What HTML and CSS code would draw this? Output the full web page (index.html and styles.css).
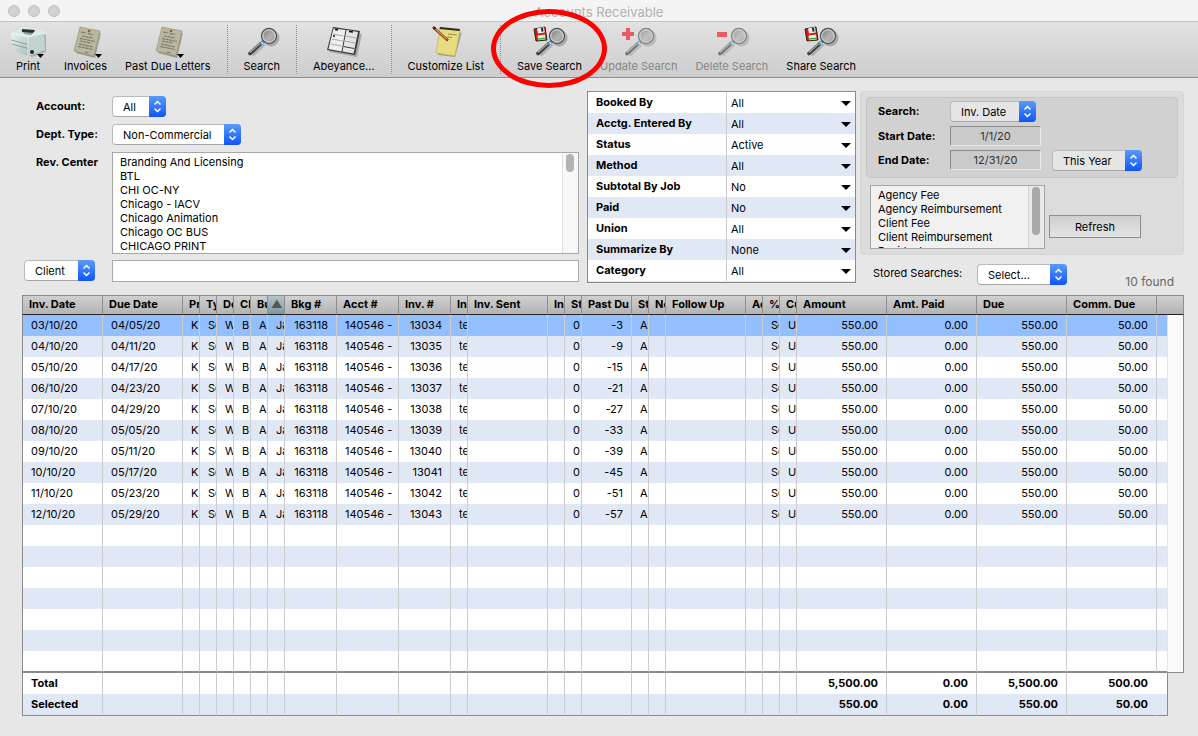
FILE: index.html
```html
<!DOCTYPE html>
<html lang="en">
  <head>
    <meta charset="utf-8">
    <title>Accounts Receivable</title>
    <link rel="stylesheet" href="styles.css">
  </head>
  <body>
    <svg class="defs" width="0" height="0" aria-hidden="true">
      <defs>
        <linearGradient id="g-lens" x1="0" y1="0" x2="1" y2="1">
          <stop offset="0" stop-color="#808080"/><stop offset="0.6" stop-color="#b4b4b4"/><stop offset="1" stop-color="#8e8e8e"/>
        </linearGradient>
        <linearGradient id="g-print" x1="0" y1="0" x2="1" y2="1">
          <stop offset="0" stop-color="#e9f3f2"/><stop offset="1" stop-color="#a9bdbd"/>
        </linearGradient>
      </defs>
      <symbol id="i-printer" viewBox="0 0 36 34">
        <path d="M2 24L22 32L36 27V10L30 8Z" fill="#000" opacity="0.2"/>
        <path d="M2 8L12 2L34 5L35 8L21 13Z" fill="#dce9e8"/>
        <path d="M12 4L25 5L24 7L21 9L12 7Z" fill="#2b3232"/>
        <path d="M15 7L23 8L21 10L14 9Z" fill="#8c9a9a"/>
        <path d="M1 8L18 12V31L2 25Z" fill="url(#g-print)"/>
        <path d="M18 12L34 8L35 25L19 31Z" fill="#c2d3d3"/>
        <path d="M1 15L18 19.500M2 19L18 23.500" stroke="#7d9292" stroke-width="0.800" fill="none"/>
        <path d="M18 12V31M2 8L18 12L34 8" stroke="#f4fafa" stroke-width="0.800" fill="none"/>
        <circle cx="22" cy="27" r="2" fill="#222"/>
      </symbol>
      <symbol id="i-letter" viewBox="0 0 36 34">
        <path d="M13 4L33 8L27 33L8 28Z" fill="#000" opacity="0.28"/>
        <path d="M12 2L32 6L26 31L6 26Z" fill="#b9b79c" stroke="#8f8d76" stroke-width="0.600"/>
        <circle cx="21" cy="6" r="1.300" fill="#9b5b2b"/>
        <path d="M13 7L18 8M20 8.500L25 9.500M14 11L25 13M12 13.500L27 16.500M12 16L23 18M11 19L25 22M10 21.500L25 24.500M17 27L21 28" stroke="#77776f" stroke-width="1.100" stroke-dasharray="3 0.600" fill="none"/>
      </symbol>
      <symbol id="i-lens" viewBox="0 0 36 34">
        <path d="M8 30L20 19" stroke="#000" stroke-width="4" opacity="0.18"/>
        <circle cx="27" cy="13" r="8.500" fill="#000" opacity="0.22"/>
        <path d="M6 28.500L17 18.500" stroke="#3c3c3c" stroke-width="3.600" stroke-linecap="round"/>
        <path d="M6 27.500L16 18.500" stroke="#aaa" stroke-width="1.200"/>
        <path d="M16 19.500L20 16" stroke="#4a8fb8" stroke-width="3.600"/>
        <path d="M17.500 17.200L19 19" stroke="#e2f3fb" stroke-width="1.200"/>
        <circle cx="25" cy="11" r="7.500" fill="#a9a9a9" stroke="#55585a" stroke-width="1.400"/>
        <circle cx="25" cy="11" r="6.200" fill="url(#g-lens)" stroke="#dedede" stroke-width="0.900"/>
      </symbol>
      <symbol id="i-floppy" viewBox="0 0 36 34">
        <path d="M2 4L13 2L15 15L4 16Z" fill="#e01414" stroke="#161616" stroke-width="0.900"/>
        <path d="M5 3.500L12 2.200L12.700 7.500L6 8.500Z" fill="#f3f3f3"/>
        <path d="M9 3L11 2.700L11.500 6.500L9.500 6.800Z" fill="#222"/>
        <path d="M5.500 10.500L13 9.500L13.600 14.500L6 15.300Z" fill="#dff8df"/>
        <path d="M6 14L13.500 13.200" stroke="#35b135" stroke-width="1.500"/>
      </symbol>
      <symbol id="i-book" viewBox="0 0 36 34">
        <path d="M8 6L36 9L31 32L3 27Z" fill="#000" opacity="0.22"/>
        <path d="M7 2L34 6L29 30L1 25Z" fill="#3a3a3a"/>
        <path d="M7.500 3.500L19.500 5L15.500 26.500L2.500 24Z" fill="#efefef"/>
        <path d="M20.500 5L32 7L27.500 28.500L16.500 26.500Z" fill="#e4e4e4"/>
        <path d="M7 9L17.500 11M6 14L16.500 16M5 19L15.500 21M19.500 11L30 13M18.500 16L29 18" stroke="#a3a3a3" stroke-width="0.900"/>
        <path d="M17.500 21.500L28 23.500" stroke="#444" stroke-width="1.200"/>
        <path d="M9 4.500L12 5M23 6.500L27 7M7 11H9" stroke="#111" stroke-width="1.500"/>
      </symbol>
      <symbol id="i-notepad" viewBox="0 0 36 34">
        <path d="M13 5L34 8L27 32L10 30Z" fill="#000" opacity="0.25"/>
        <path d="M12 3L32 5L27 31L8 28Z" fill="#e8dd7e" stroke="#b5a94f" stroke-width="0.600"/>
        <path d="M12 2L32 4L31.500 6L11.500 4Z" fill="#2c2a22"/>
        <path d="M20 9L29 10M19 12L24 12.500" stroke="#958b48" stroke-width="1"/>
        <path d="M6 3L20 15.500" stroke="#6d3a17" stroke-width="2.600"/>
        <path d="M7 3.500L19 14.500" stroke="#e08b3c" stroke-width="1.400"/>
        <path d="M5 2L7.500 4" stroke="#5b1c1c" stroke-width="2.600"/>
      </symbol>
      <symbol id="i-plus" viewBox="0 0 36 34">
        <path d="M5 3H9V7H13V11H9V15H5V11H1V7H5Z" fill="#f01822"/>
      </symbol>
      <symbol id="i-minus" viewBox="0 0 36 34">
        <path d="M3 7H13V12H3Z" fill="#f01822"/>
      </symbol>
      <symbol id="i-drop" viewBox="0 0 36 34">
        <path d="M27 29H34L30.500 33Z" fill="#000"/>
      </symbol>
    </svg>

    <div class="window">
      <header class="titlebar">
        <div class="lights"><span></span><span></span><span></span></div>
        <h1 class="titlebar__title">Accounts Receivable</h1>
      </header>

      <nav class="toolbar">
        <button class="tool" type="button"><svg><use href="#i-printer"/><use href="#i-drop"/></svg>Print</button>
        <button class="tool" type="button"><svg><use href="#i-letter"/><use href="#i-drop"/></svg>Invoices</button>
        <button class="tool" type="button"><svg><use href="#i-letter"/><use href="#i-drop"/></svg>Past Due Letters</button>
        <span class="toolbar__sep"></span>
        <button class="tool" type="button"><svg><use href="#i-lens"/></svg>Search</button>
        <span class="toolbar__sep"></span>
        <button class="tool" type="button"><svg><use href="#i-book"/></svg>Abeyance...</button>
        <span class="toolbar__sep"></span>
        <button class="tool" type="button"><svg><use href="#i-notepad"/></svg>Customize List</button>
        <span class="toolbar__sep"></span>
        <button class="tool tool--marked" type="button">
          <svg><use href="#i-lens"/><use href="#i-floppy"/></svg>Save Search
          <span class="tool__ring"></span>
        </button>
        <button class="tool" type="button" disabled><svg><use href="#i-lens"/><use href="#i-plus"/></svg>Update Search</button>
        <button class="tool" type="button" disabled><svg><use href="#i-lens"/><use href="#i-minus"/></svg>Delete Search</button>
        <button class="tool" type="button"><svg><use href="#i-lens"/><use href="#i-floppy"/></svg>Share Search</button>
      </nav>

      <main class="content">
        <form class="filters">
          <div class="account">
            <label class="account__label" for="account">Account:</label>
            <span class="popup popup--xs"><select id="account"><option>All</option></select></span>
            <label class="account__label" for="dept">Dept. Type:</label>
            <span class="popup popup--lg"><select id="dept"><option>Non-Commercial</option></select></span>
            <label class="account__label" for="center">Rev. Center</label>
            <div class="listbox listbox--center">
              <select id="center" multiple>
                <option>Branding And Licensing</option>
                <option>BTL</option>
                <option>CHI OC-NY</option>
                <option>Chicago - IACV</option>
                <option>Chicago Animation</option>
                <option>Chicago OC BUS</option>
                <option>CHICAGO PRINT</option>
              </select>
              <div class="listbox__track"><span></span></div>
            </div>
            <span class="popup popup--sm"><select aria-label="Search field"><option>Client</option></select></span>
            <input class="account__input" type="text" aria-label="Client">
          </div>

          <div class="options">
            <div class="option"><label for="o-booked">Booked By</label><select id="o-booked"><option>All</option></select></div>
            <div class="option"><label for="o-acctg">Acctg. Entered By</label><select id="o-acctg"><option>All</option></select></div>
            <div class="option"><label for="o-status">Status</label><select id="o-status"><option>Active</option></select></div>
            <div class="option"><label for="o-method">Method</label><select id="o-method"><option>All</option></select></div>
            <div class="option"><label for="o-subtotal">Subtotal By Job</label><select id="o-subtotal"><option>No</option></select></div>
            <div class="option"><label for="o-paid">Paid</label><select id="o-paid"><option>No</option></select></div>
            <div class="option"><label for="o-union">Union</label><select id="o-union"><option>All</option></select></div>
            <div class="option"><label for="o-summarize">Summarize By</label><select id="o-summarize"><option>None</option></select></div>
            <div class="option"><label for="o-category">Category</label><select id="o-category"><option>All</option></select></div>
          </div>

          <div class="side">
            <div class="panel">
              <div class="dates">
                <label for="search-by">Search:</label>
                <span class="popup popup--date"><select id="search-by"><option>Inv. Date</option></select></span>
                <label class="dates__start" for="start">Start Date:</label>
                <input id="start" type="text" value="1/1/20">
                <label class="dates__start" for="end">End Date:</label>
                <input id="end" type="text" value="12/31/20">
                <span class="popup popup--md"><select aria-label="Period"><option>This Year</option></select></span>
              </div>
              <div class="fees">
                <div class="listbox listbox--fees">
                  <select aria-label="Fee types" multiple>
                    <option>Agency Fee</option>
                    <option>Agency Reimbursement</option>
                    <option>Client Fee</option>
                    <option>Client Reimbursement</option>
                    <option>Residuals</option>
                  </select>
                  <div class="listbox__track"><span></span></div>
                </div>
                <button class="refresh" type="submit">Refresh</button>
              </div>
            </div>
            <div class="stored">
              <label for="stored">Stored Searches:</label>
              <span class="popup popup--md"><select id="stored"><option>Select...</option></select></span>
              <span class="stored__found">10 found</span>
            </div>
          </div>
        </form>

        <table class="invoices" id="invoices">
          <colgroup></colgroup>
          <thead></thead>
          <tbody></tbody>
          <tfoot></tfoot>
        </table>
      </main>
    </div>

    <script>
      // name, width, value (same for every invoice unless it is a function), alignment
      const columns = [
        ['Inv. Date', 81, r => r[0]],
        ['Due Date', 80, r => r[1]],
        ['Pr', 17, 'K'],
        ['Ty', 17, 'Se'],
        ['De', 17, 'W'],
        ['Cl', 17, 'B'],
        ['Bu', 17, 'A'],
        ['▲', 17, 'Ja'],
        ['Bkg #', 52, '163118', 'num'],
        ['Acct #', 62, '140546 -'],
        ['Inv. #', 52, r => r[2], 'num'],
        ['In', 17, 'te'],
        ['Inv. Sent', 80, ''],
        ['In', 17, ''],
        ['St', 17, '0'],
        ['Past Du', 50, r => r[3], 'num'],
        ['St', 17, 'A'],
        ['No', 17, ''],
        ['Follow Up', 80, ''],
        ['Ac', 17, ''],
        ['%', 17, 'Se'],
        ['Cu', 17, 'U'],
        ['Amount', 90, '550.00', 'num'],
        ['Amt. Paid', 90, '0.00', 'num'],
        ['Due', 90, '550.00', 'num'],
        ['Comm. Due', 90, '50.00', 'num'],
        ['', 0, '']
      ];

      const invoices = [
        ['03/10/20', '04/05/20', '13034', '-3'],
        ['04/10/20', '04/11/20', '13035', '-9'],
        ['05/10/20', '04/17/20', '13036', '-15'],
        ['06/10/20', '04/23/20', '13037', '-21'],
        ['07/10/20', '04/29/20', '13038', '-27'],
        ['08/10/20', '05/05/20', '13039', '-33'],
        ['09/10/20', '05/11/20', '13040', '-39'],
        ['10/10/20', '05/17/20', '13041', '-45'],
        ['11/10/20', '05/23/20', '13042', '-51'],
        ['12/10/20', '05/29/20', '13043', '-57']
      ];

      const totals = [
        { 0: 'Total', 22: '5,500.00', 23: '0.00', 24: '5,500.00', 25: '500.00' },
        { 0: 'Selected', 22: '550.00', 23: '0.00', 24: '550.00', 25: '50.00' }
      ];

      const VISIBLE_ROWS = 17;
      const table = document.getElementById('invoices');

      function cell(text, cls) {
        return '<td class="' + (cls || '') + '">' + text + '</td>';
      }

      columns.forEach(function(c) {
        const col = document.createElement('col');
        if (c[1]) col.style.width = c[1] + 'px';
        table.querySelector('colgroup').appendChild(col);
      });
      table.querySelector('colgroup').insertAdjacentHTML('beforeend', '<col class="invoices__scroll">');

      table.tHead.innerHTML = '<tr>' + columns.map(function(c) {
        return '<th' + (c[0] === '▲' ? ' class="sorted"' : '') + '>' + c[0] + '</th>';
      }).join('') + '<th></th></tr>';

      let body = '';
      for (let i = 0; i < VISIBLE_ROWS; i++) {
        const row = invoices[i];
        body += '<tr' + (i === 0 ? ' class="selected"' : '') + '>';
        body += columns.map(function(c) {
          if (!row) return cell('');
          return cell(typeof c[2] === 'function' ? c[2](row) : c[2], c[3]);
        }).join('');
        if (i === 0) body += '<td class="track" rowspan="' + VISIBLE_ROWS + '"></td>';
        body += '</tr>';
      }
      table.tBodies[0].innerHTML = body;

      table.tFoot.innerHTML = totals.map(function(t) {
        return '<tr>' + columns.map(function(c, i) {
          return cell(t[i] || '', c[3]);
        }).join('') + '<td class="gutter"></td></tr>';
      }).join('');
    </script>
  </body>
</html>
```
FILE: styles.css
```css
* { box-sizing: border-box; }

body {
  margin: 0;
  background: #e7e7e7;
  color: #000;
  font-family: Inter, "Liberation Sans", sans-serif;
  font-size: 11px;
  line-height: 14px;
}

button, select, input { font: inherit; color: inherit; margin: 0; }

.defs { position: absolute; }

.window { min-height: 100vh; background: #e7e7e7; }

/* title bar */
.titlebar {
  position: relative;
  display: flex;
  align-items: center;
  justify-content: center;
  height: 22px;
  background: #f4f4f4;
  border-bottom: 1px solid #c3c3c3;
}
.titlebar__title { margin: 0; padding-top: 2px; font-size: 13px; font-weight: 400; color: #b0b0b0; }
.lights { position: absolute; left: 8px; top: 5px; display: flex; gap: 8px; }
.lights span { width: 12px; height: 12px; border-radius: 50%; background: #d2d2d2; border: 1px solid #c0c0c0; }

/* toolbar */
.toolbar {
  display: flex;
  height: 56px;
  padding-left: 1px;
  background: linear-gradient(#e2e2e2, #cdcdcd);
  border-bottom: 1px solid #8d8d8d;
}
.toolbar__sep { margin: 3px 7px; border-left: 1px dotted #8a8a8a; }
.tool {
  display: flex;
  flex-direction: column;
  align-items: center;
  padding: 3px 9px 0;
  border: none;
  background: none;
  white-space: nowrap;
}
.tool svg { width: 36px; height: 34px; flex: none; }
.tool:disabled { color: #868686; }
.tool:disabled svg { opacity: 0.65; }
.tool--marked { position: relative; }
.tool__ring {
  position: absolute;
  left: 50%;
  top: -13px;
  width: 116px;
  height: 79px;
  margin-left: -59px;
  border: 5px solid #f00;
  border-radius: 50%;
  z-index: 1;
}

/* filters */
.content { padding: 13px 14px 20px 22px; }
.filters { display: flex; gap: 4px; height: 204px; }

.account {
  flex: 1;
  display: grid;
  grid-template-columns: 82px 1fr;
  grid-template-rows: 22px 22px 102px 22px;
  gap: 6px;
  padding: 5px 4px 0 2px;
  align-content: start;
}
.account__label { padding: 3px 0 0 12px; font-weight: 700; }
.account__input { width: 100%; border: 1px solid #aaa; padding: 0 8px; }

.popup { position: relative; display: block; height: 21px; }
.popup--xs { width: 54px; }
.popup--sm { width: 71px; }
.popup--date { width: 86px; }
.popup--md { width: 90px; }
.popup--lg { width: 129px; }
.popup select {
  display: block;
  width: 100%;
  height: 100%;
  padding: 0 18px 0 10px;
  appearance: none;
  border: 1px solid #b9b9b9;
  border-bottom-color: #a6a6a6;
  border-radius: 4px;
  background: #fff;
}
.popup::after {
  content: "";
  position: absolute;
  top: 0;
  right: 0;
  bottom: 0;
  width: 17px;
  border-radius: 0 4px 4px 0;
  background: url("data:image/svg+xml,%3Csvg xmlns='http://www.w3.org/2000/svg' width='17' height='21' fill='none' stroke='%23fff' stroke-width='1.500'%3E%3Cpath d='M5.500 8.500L8.500 5.500L11.500 8.500M5.500 12.500L8.500 15.500L11.500 12.500'/%3E%3C/svg%3E") center no-repeat, linear-gradient(#5a9bf8, #1054fb);
  pointer-events: none;
}

.listbox { display: flex; border: 1px solid #a6a6a6; background: #fff; }
.listbox select {
  flex: 1;
  min-width: 0;
  padding: 2px 0 0 5px;
  border: none;
  outline: none;
  background: none;
  overflow: hidden;
  scrollbar-width: none;
}
.listbox option { min-height: 14px; height: 14px; line-height: 14px; padding: 0 2px; }
.listbox__track { width: 16px; padding: 1px 3px; background: #f8f8f8; border-left: 1px solid #e0e0e0; }
.listbox__track span { display: block; width: 8px; height: 18px; border-radius: 4px; background: #b3b3b3; }

.options { width: 269px; height: 192px; border: 1px solid #8a8a8a; background: #e1e8f5; }
.option { display: flex; height: 21px; background: #fff; }
.option:nth-child(even) { background: #e1e8f5; }
.option label { width: 139px; padding: 3px 0 0 8px; font-weight: 700; border-right: 1px solid #ccc; }
.option select {
  flex: 1;
  padding: 1px 20px 0 4px;
  appearance: none;
  border: none;
  background: url("data:image/svg+xml,%3Csvg xmlns='http://www.w3.org/2000/svg' width='10' height='5'%3E%3Cpath d='M0 0H10L5 5Z'/%3E%3C/svg%3E") right 4px top 9px no-repeat;
}

.side { width: 324px; }
.panel { height: 164px; padding: 5px; border: 1px solid #d5d5d5; border-radius: 4px; background: #dcdcdc; }
.dates {
  display: grid;
  grid-template-columns: 61px 91px 90px;
  grid-template-rows: 21px 20px 20px;
  column-gap: 11px;
  row-gap: 4px;
  height: 81px;
  padding: 3px 11px;
  border: 1px solid #c6c6c6;
  border-radius: 4px;
  background: #d1d1d1;
}
.dates label { padding-top: 3px; font-weight: 700; white-space: nowrap; }
.dates__start { grid-column: 1; }
.dates input {
  width: 100%;
  padding: 0;
  border: 1px solid;
  border-color: #8c8c8c #e8e8e8 #e8e8e8 #8c8c8c;
  background: #cacaca;
  color: #333;
  text-align: center;
}
.dates .popup select { background: #e5e5e5; }
.fees { display: flex; gap: 4px; padding: 7px 4px 0; }
.listbox--fees { width: 175px; height: 64px; background: #f1f1f1; }
.listbox--fees .listbox__track { background: #e9e9e9; border-color: #d2d2d2; }
.listbox--fees .listbox__track span { height: 48px; background: #a9a9a9; }
.refresh {
  align-self: flex-end;
  width: 92px;
  height: 23px;
  margin-bottom: 11px;
  padding: 0;
  border: 1px solid #8f8f8f;
  background: linear-gradient(#cfcfcf, #e3e3e3);
}
.stored { display: flex; gap: 12px; padding: 9px 10px 0 13px; }
.stored label { width: 92px; padding-top: 2px; white-space: nowrap; }
.stored__found { margin-left: auto; padding-top: 11px; font-size: 12px; color: #666; }

/* invoice list */
.invoices {
  width: 100%;
  table-layout: fixed;
  border-spacing: 0;
  border-top: 1px solid #8a8a8a;
}
.invoices__scroll { width: 16px; }
.invoices th, .invoices td {
  padding: 0 0 2px;
  overflow: hidden;
  white-space: nowrap;
  text-align: left;
}
.invoices th:first-child, .invoices td:first-child { border-left: 1px solid #8a8a8a; }
.invoices th {
  height: 19px;
  padding-left: 6px;
  border-right: 1px solid #8f8f8f;
  border-bottom: 1px solid #222;
  background: linear-gradient(#d0d0d0, #b3b3b3);
  font-weight: 700;
}
.invoices th.sorted { padding-left: 3px; background: linear-gradient(#b5c4cc, #7e979e); color: #555; }
.invoices td { height: 21px; padding-left: 8px; border-right: 1px solid #ccc; }
.invoices td.num { padding: 0 8px 2px 0; text-align: right; }
.invoices tbody tr { background: #fff; }
.invoices tbody tr:nth-child(even) { background: #e1e8f5; }
.invoices tbody tr.selected { background: #94bffe; }
.invoices tbody tr:last-child td { height: 22px; }
.invoices tbody tr:last-child td, .invoices .track { border-bottom: 2px solid #8a8a8a; }
.invoices tbody td:nth-child(27) { border-right-color: #e4e4e4; }
.invoices td.track { border-right: 1px solid #8a8a8a; border-bottom-width: 1px; background: #fafafa; }
.invoices th:nth-child(27) { border-right: none; }
.invoices tfoot tr { background: #fff; font-weight: 700; }
.invoices tfoot tr:last-child { background: #e1e8f5; }
.invoices tfoot tr:last-child td { height: 22px; border-bottom: 1px solid #8a8a8a; }
.invoices tfoot td:nth-child(26) { border-right-color: transparent; }
.invoices tfoot td:nth-child(27) { border-right-color: #8a8a8a; }
.invoices tfoot tr td.gutter { border: none; background: #e7e7e7; }
```
